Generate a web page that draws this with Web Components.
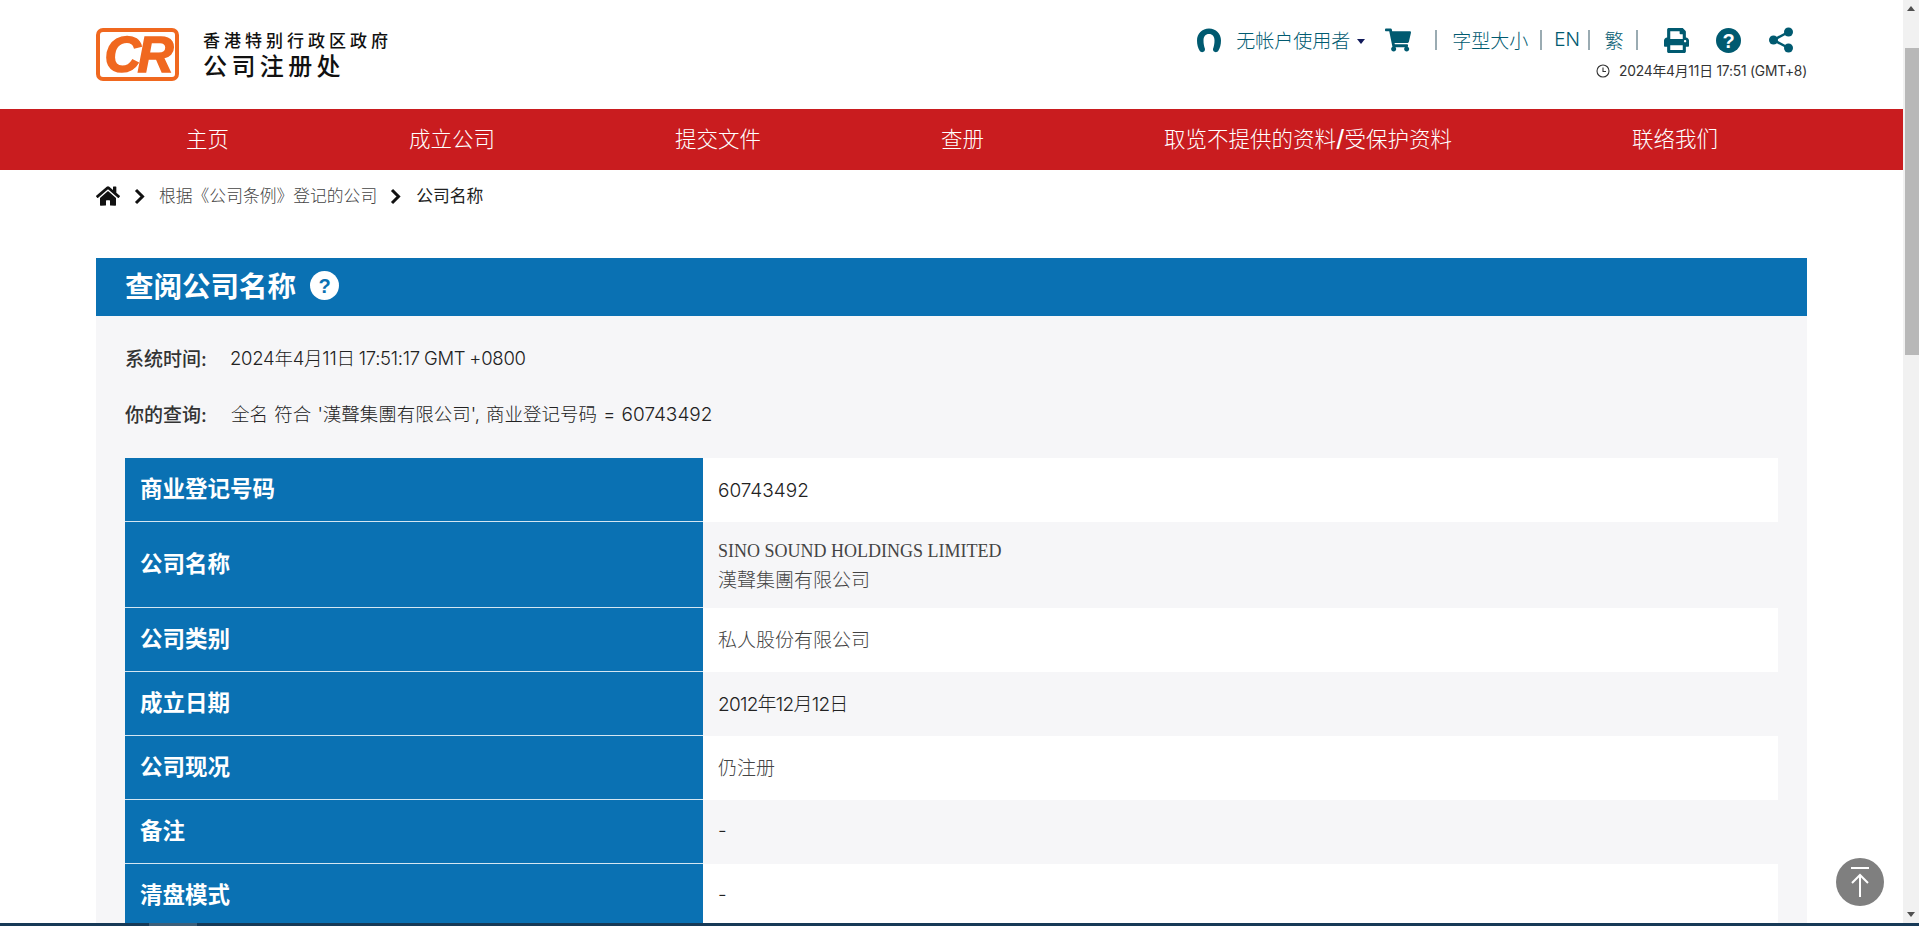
<!DOCTYPE html>
<html lang="zh-CN"><head><meta charset="utf-8"><title>公司注册处</title>
<style>
html,body{margin:0;height:100%;overflow:hidden;background:#fff}
body{font-family:Inter,"Noto Sans CJK SC","Noto Sans",sans-serif;color:#333}
</style></head><body>
<cr-app>
  <cr-header slot="page"></cr-header>
  <cr-nav slot="page">
    <a>主页</a><a>成立公司</a><a>提交文件</a><a>查册</a><a>取览不提供的资料<b style="font-weight:500;font-size:23px;line-height:1">/</b>受保护资料</a><a>联络我们</a>
  </cr-nav>
  <cr-breadcrumb slot="page"></cr-breadcrumb>
  <cr-panel slot="page" heading="查阅公司名称">
    <cr-meta label="系统时间:" style="margin-bottom:30px"><span style="letter-spacing:-.25px;word-spacing:-1px">2024年4月11日 17:51:17 GMT +0800</span></cr-meta>
    <cr-meta label="你的查询:"><span style="word-spacing:1px;margin-left:1px">全名 符合 '漢聲集團有限公司', 商业登记号码 = <span style="font-size:19px">60743492</span></span></cr-meta>
    <cr-table>
      <cr-row label="商业登记号码" flat>60743492</cr-row>
      <cr-row label="公司名称" alt tall flat><span style="font-family:'Liberation Serif','Noto Sans CJK TC',serif;font-weight:400;color:#444;display:block;line-height:27px;padding-top:3px;font-size:18px">SINO SOUND HOLDINGS LIMITED<br><span style="font-family:'Noto Sans CJK TC',serif;font-weight:300;font-size:19px">漢聲集團有限公司</span></span></cr-row>
      <cr-row label="公司类别" muted>私人股份有限公司</cr-row>
      <cr-row label="成立日期" alt><span style="letter-spacing:-.75px">2012年12月12日</span></cr-row>
      <cr-row label="公司现况" muted>仍注册</cr-row>
      <cr-row label="备注" alt>-</cr-row>
      <cr-row label="清盘模式">-</cr-row>
    </cr-table>
  </cr-panel>
  <cr-top slot="over"></cr-top>
</cr-app>
<template id="t-app"><style>
:host{display:grid;grid-template-columns:1fr 16px;grid-template-rows:1fr 3px;height:100vh;position:relative;overflow:hidden}
main{overflow:hidden;min-width:0}
.sb{background:#f1f1f1;display:flex;flex-direction:column;align-items:center;position:relative}
.arrow{width:0;height:0;border-left:4px solid transparent;border-right:4px solid transparent;margin-top:6px}
.up{border-bottom:5px solid #505050}
.thumb{position:absolute;top:48px;left:2px;right:0;height:307px;background:#b8b8b8}
.dn{border-top:5px solid #505050;position:absolute;bottom:6px;margin:0}
.bar{grid-column:1/3;background:#173a57;position:relative}
.bar i{position:absolute;left:149px;width:48px;top:0;bottom:0;background:#3c5f7a}
</style><main><slot name="page"></slot></main><div class="sb"><div class="arrow up"></div><div class="thumb"></div><div class="arrow dn"></div></div><div class="bar"><i></i></div><slot name="over"></slot></template>
<template id="t-header"><style>
:host{display:flex;height:109px;box-sizing:border-box;padding:28px 96px 0;justify-content:space-between;color:#005a70}
.brand{display:flex;align-items:flex-start;gap:24px;color:#111}
.logo{width:83px;height:53px;box-sizing:border-box;border:4.500px solid #f0681f;border-radius:7px;background:#fff;color:#f0681f;display:flex;align-items:center;justify-content:center;font:italic 700 50px/1 "Liberation Sans",sans-serif;letter-spacing:-3px;-webkit-text-stroke:1.500px #f0681f;overflow:hidden}
.bt{display:flex;flex-direction:column;padding-top:2px}
.bt b{font-weight:500;font-size:17px;letter-spacing:4px;line-height:22px}
.bt strong{font-weight:500;font-size:24px;letter-spacing:4.400px;line-height:30px}
.right{display:flex;flex-direction:column;align-items:flex-end}
.tools{display:flex;align-items:center;height:24px;padding-right:14px;font-size:19px;font-weight:300;white-space:nowrap}
.tools span{margin-bottom:2px}
.tools svg{display:block;flex:none}
.tools .caret{width:0;height:0;border:4px solid transparent;border-top:5px solid #111a5a;border-bottom:0;margin:2px 0 0 7px}
.tools .sep{width:2px;height:20px;background:#9aabb2;flex:none;margin-bottom:0}
.time{display:flex;align-items:center;font-size:13.800px;font-weight:400;color:#333;margin-top:9px;letter-spacing:-.2px;white-space:nowrap;line-height:20px}
.time svg{margin-right:9px}
</style><div class="brand"><div class="logo">CR</div><div class="bt"><b>香港特别行政区政府</b><strong>公司注册处</strong></div></div>
<div class="right"><div class="tools">
<svg width="24" height="25" viewBox="0 0 24 25" fill="#005a70"><path d="M12 0.500C5 .5 0 5.500 0 12.500c0 4 1 7.500 2.800 10.500 1 1.500 3.700 1.500 4.700 0 .7-1 .6-2 .1-3.200C7 18 6.500 15.500 6.500 12.500 6.500 8.500 8.500 6 12 6s5.500 2.500 5.500 6.500c0 3-.5 5.500-1.100 7.300-.5 1.200-.6 2.200.1 3.200 1 1.500 3.700 1.500 4.700 0C23 20 24 16.500 24 12.500 24 5.500 19 .5 12 .5z"/></svg>
<span style="margin-left:15px">无帐户使用者</span><span class="caret"></span>
<svg style="margin-left:19.500px" width="26" height="24" viewBox="0 0 576 512" fill="#005a70"><path d="M528 301.300l47.300-208C578.700 78.300 567.300 64 552 64H159.200l-9.200-44.800C147.800 8 137.900 0 126.500 0H24C10.700 0 0 10.700 0 24v16c0 13.300 10.700 24 24 24h69.900l70.200 343.400C147.300 417.100 136 435.200 136 456c0 30.900 25.100 56 56 56s56-25.100 56-56c0-15.700-6.400-29.800-16.800-40h209.600C430.400 426.200 424 440.300 424 456c0 30.900 25.100 56 56 56s56-25.100 56-56c0-22.200-12.900-41.300-31.600-50.400l5.500-24.300c3.400-15-8-29.300-23.400-29.300H218.100l-6.500-32h293c11.200 0 20.900-7.800 23.400-18.700z"/></svg>
<span class="sep" style="margin-left:24px"></span><span style="margin-left:15.500px">字型大小</span>
<span class="sep" style="margin-left:12px"></span><span style="margin-left:12px">EN</span>
<span class="sep" style="margin-left:8px"></span><span style="margin-left:14.500px">繁</span>
<span class="sep" style="margin-left:12.500px"></span>
<svg style="margin-left:26px" width="25" height="25" viewBox="0 0 512 512" fill="#005a70"><path d="M448 192V77.250c0-8.490-3.370-16.620-9.370-22.630L393.370 9.370c-6-6-14.140-9.370-22.630-9.370H96C78.330 0 64 14.330 64 32v160c-35.350 0-64 28.650-64 64v112c0 8.840 7.160 16 16 16h48v96c0 17.670 14.330 32 32 32h320c17.670 0 32-14.330 32-32v-96h48c8.840 0 16-7.160 16-16V256c0-35.350-28.650-64-64-64zm-64 256H128v-96h256v96zm0-224H128V64h192v48c0 8.840 7.160 16 16 16h48v96zm48 72c-13.250 0-24-10.750-24-24 0-13.270 10.750-24 24-24s24 10.730 24 24c0 13.250-10.750 24-24 24z"/></svg>
<svg style="margin-left:27px" width="25" height="25" viewBox="0 0 25 25"><circle cx="12.500" cy="12.500" r="12.500" fill="#005a70"/><text x="12.500" y="20" text-anchor="middle" font-family="Liberation Sans" font-weight="700" font-size="20" fill="#fff">?</text></svg>
<svg style="margin-left:28px" width="24" height="26" viewBox="0 0 24 26" fill="#005a70"><circle cx="19.500" cy="5" r="4.500"/><circle cx="4.500" cy="13" r="4.500"/><circle cx="19.500" cy="21" r="4.500"/><path d="M4.500 13L19.500 5M4.500 13l15 8" stroke="#005a70" stroke-width="2.500"/></svg>
</div><div class="time"><svg width="14" height="14" viewBox="0 0 14 14" fill="none" stroke="#333" stroke-width="1.100"><circle cx="7" cy="7" r="6"/><path d="M7 3.500V7.500H10"/></svg>2024年4月11日 17:51 (GMT+8)</div></div></template>
<template id="t-nav"><style>
:host{display:flex;height:61px;box-sizing:border-box;padding-bottom:5px;align-items:center;background:#c91c1f;color:#fff;padding-left:186px;gap:180px;font-size:21.500px;font-weight:300;white-space:nowrap}
</style><slot></slot></template>
<template id="t-bc"><style>
:host{display:flex;height:88px;box-sizing:border-box;padding:14px 96px 0;align-items:flex-start;font-size:16.800px;font-weight:300;color:#444;white-space:nowrap}
.r{display:flex;align-items:center;height:24px}
.r span{margin-bottom:2px}
svg{display:block;flex:none}
.r .cur{color:#222;font-weight:400}
</style><div class="r"><svg width="24" height="22" viewBox="0 0 576 512" fill="#111" preserveAspectRatio="none"><path d="M280.400 148.300L96 300.100V464a16 16 0 0 0 16 16l112.100-.3a16 16 0 0 0 15.900-16V368a16 16 0 0 1 16-16h64a16 16 0 0 1 16 16v95.600a16 16 0 0 0 16 16.100L464 480a16 16 0 0 0 16-16V300L295.700 148.300a12.200 12.200 0 0 0-15.300 0zM571.600 251.500L488 182.600V44.100a12 12 0 0 0-12-12h-56a12 12 0 0 0-12 12v72.600L318.500 43a48 48 0 0 0-61 0L4.300 251.500a12 12 0 0 0-1.600 16.900l25.500 31A12 12 0 0 0 45.200 301l235.200-193.700a12.200 12.200 0 0 1 15.300 0L530.900 301a12 12 0 0 0 16.900-1.600l25.500-31a12 12 0 0 0-1.700-17z"/></svg>
<svg style="margin-left:14px" width="11" height="17" viewBox="0 0 11 17" fill="none" stroke="#111" stroke-width="3"><path d="M2 2L8.500 8.500 2 15"/></svg>
<span style="margin-left:14px">根据《公司条例》登记的公司</span>
<svg style="margin-left:13px" width="11" height="17" viewBox="0 0 11 17" fill="none" stroke="#111" stroke-width="3"><path d="M2 2L8.500 8.500 2 15"/></svg>
<span class="cur" style="margin-left:15px">公司名称</span></div></template>
<template id="t-panel"><style>
:host{display:block;margin:0 96px 0;background:#f6f6f8}
h1{margin:0;height:58px;box-sizing:border-box;padding-bottom:6px;display:flex;align-items:center;background:#0a71b3;color:#fff;padding-left:29px;font-size:28.500px;font-weight:700;gap:14px}
svg{display:block;margin-top:2px}
.b{padding:28px 29px 0}
</style><h1><span id="h"></span><svg width="29" height="29" viewBox="0 0 29 29"><circle cx="14.500" cy="14.500" r="14.500" fill="#fff"/><text x="14.500" y="21.500" text-anchor="middle" font-family="Liberation Sans" font-weight="700" font-size="20" fill="#0a71b3">?</text></svg></h1><div class="b"><slot></slot></div></template>
<template id="t-meta"><style>
:host{display:flex;align-items:center;height:26px;font-size:18.500px;font-weight:300;color:#222;white-space:nowrap}
b{font-size:19px;font-weight:500;width:105px;flex:none;color:#333}
</style><b id="l"></b><span><slot></slot></span></template>
<template id="t-table"><style>
:host{display:block;margin-top:32px}
</style><slot></slot></template>
<template id="t-row"><style>
:host{display:grid;grid-template-columns:578px 1fr;height:64px;background:#fff;font-size:19px;font-weight:300;color:#222}
:host([alt]){background:#f6f6f8}
:host([tall]){height:86px}
:host([muted]){color:#444}
.k{background:#0a71b3;color:#fff;font-size:22.500px;font-weight:700;display:flex;align-items:center;padding:0 0 6px 15px;border-bottom:1px solid #d4e6f2}
.v{display:flex;align-items:center;padding:0 0 4px 15px;white-space:nowrap}
:host([flat]) .v{padding-bottom:0}
</style><div class="k" id="k"></div><div class="v"><div><slot></slot></div></div></template>
<template id="t-top"><style>
:host{position:absolute;right:35px;bottom:20px;width:48px;height:48px;border-radius:50%;background:#7f7f7f;display:flex;align-items:center;justify-content:center}
</style><svg width="24" height="34" viewBox="0 0 24 34" fill="none" stroke="#fff" stroke-width="2"><path d="M3 3H21M12 32V11M4 18L12 10 20 18"/></svg></template>
<script>
function def(name,tid,init){
  customElements.define(name,class extends HTMLElement{
    constructor(){super();this.attachShadow({mode:"open"}).appendChild(document.getElementById(tid).content.cloneNode(true));}
    connectedCallback(){if(init)init.call(this,this.shadowRoot);}
  });
}
def("cr-app","t-app");
def("cr-header","t-header");
def("cr-nav","t-nav");
def("cr-breadcrumb","t-bc");
def("cr-panel","t-panel",function(s){s.getElementById("h").textContent=this.getAttribute("heading");});
def("cr-meta","t-meta",function(s){s.getElementById("l").textContent=this.getAttribute("label");});
def("cr-table","t-table");
def("cr-row","t-row",function(s){s.getElementById("k").textContent=this.getAttribute("label");});
def("cr-top","t-top");
</script>
</body></html>
